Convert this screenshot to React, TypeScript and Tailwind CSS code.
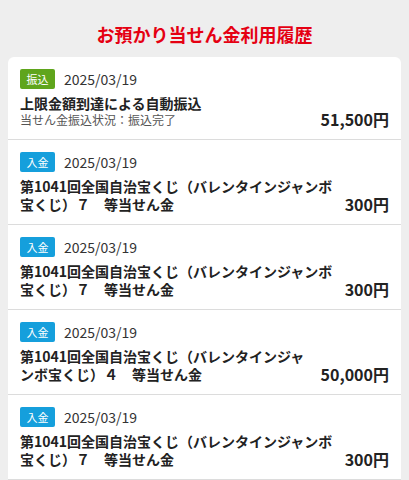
import React from "react"

interface HistoryItem {
  kind: "振込" | "入金"
  date: string
  title: string
  note?: string
  amount: string
}

const items: HistoryItem[] = [
  {
    kind: "振込",
    date: "2025/03/19",
    title: "上限金額到達による自動振込",
    note: "当せん金振込状況：振込完了",
    amount: "51,500円",
  },
  {
    kind: "入金",
    date: "2025/03/19",
    title: "第1041回全国自治宝くじ（バレンタインジャンボ宝くじ）７　等当せん金",
    amount: "300円",
  },
  {
    kind: "入金",
    date: "2025/03/19",
    title: "第1041回全国自治宝くじ（バレンタインジャンボ宝くじ）７　等当せん金",
    amount: "300円",
  },
  {
    kind: "入金",
    date: "2025/03/19",
    title: "第1041回全国自治宝くじ（バレンタインジャンボ宝くじ）４　等当せん金",
    amount: "50,000円",
  },
  {
    kind: "入金",
    date: "2025/03/19",
    title: "第1041回全国自治宝くじ（バレンタインジャンボ宝くじ）７　等当せん金",
    amount: "300円",
  },
]

function Badge({ kind }: { kind: HistoryItem["kind"] }) {
  return (
    <span
      className={
        kind === "振込"
          ? "flex h-5 w-[35px] items-center justify-center rounded-[2px] bg-[#5fa51c] text-[11px] leading-none text-white"
          : "flex h-5 w-[35px] items-center justify-center rounded-[2px] bg-[#159fdc] text-[11px] leading-none text-white"
      }
    >
      {kind}
    </span>
  )
}

function HistoryRow({ item }: { item: HistoryItem }) {
  return (
    <li className="border-b border-[#dcdcdc] px-3 pt-3 pb-[11px]">
      <div className="flex items-center gap-[9px]">
        <Badge kind={item.kind} />
        <span className="text-[14px] leading-5 text-[#333]">{item.date}</span>
      </div>
      <div className="mt-[5px] flex items-end gap-2">
        <div className="min-w-0 flex-1">
          <p className="text-[14px] font-bold leading-[18px] text-[#222]">
            {item.title}
          </p>
          {item.note && (
            <p className="text-[12px] leading-4 text-[#555]">{item.note}</p>
          )}
        </div>
        <span className="shrink-0 text-[16px] font-bold leading-[18px] text-[#222]">
          {item.amount}
        </span>
      </div>
    </li>
  )
}

export default function App() {
  return (
    <div className="min-h-screen bg-[#eeeeee] font-['Noto_Sans_CJK_JP',sans-serif]">
      <h1 className="pt-6 pb-[13px] text-center text-[18px] font-bold leading-5 text-[#e50012]">
        お預かり当せん金利用履歴
      </h1>
      <ul className="mx-2 overflow-hidden rounded-t-md bg-white">
        {items.map((item, i) => (
          <HistoryRow key={i} item={item} />
        ))}
      </ul>
    </div>
  )
}
